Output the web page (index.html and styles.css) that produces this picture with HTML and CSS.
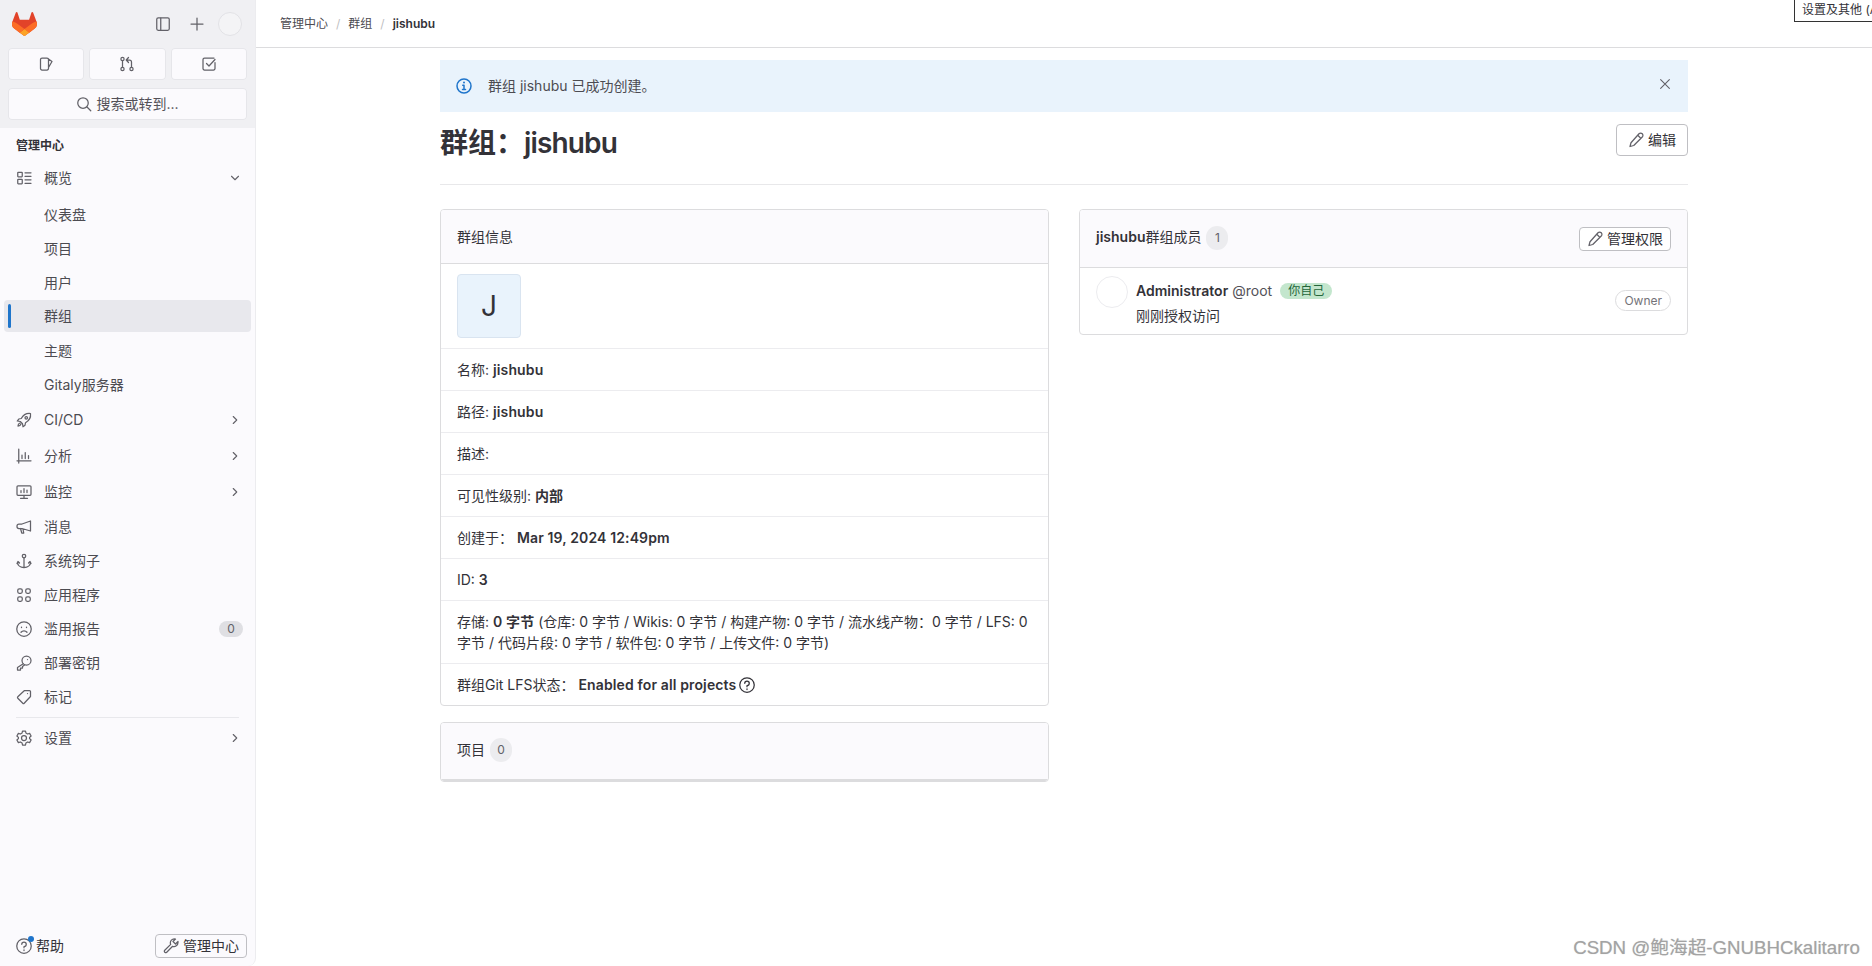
FILE: index.html
```html
<!DOCTYPE html>
<html lang="zh-CN">
<head>
<meta charset="UTF-8">
<meta name="viewport" content="width=device-width, initial-scale=1.0">
<title>群组：jishubu</title>
<link rel="stylesheet" href="styles.css">
</head>
<body>
    <aside class="sidebar">
        <div class="side-top">
            <div class="logo-row">
                <svg class="logo" viewBox="0 0 25 24">
                    <path d="m24.507 9.5-.034-.09L21.082.562a.896.896 0 0 0-1.694.091l-2.29 7.01H7.825L5.535.653a.898.898 0 0 0-1.694-.09L.451 9.411.416 9.5a6.297 6.297 0 0 0 2.09 7.278l.012.01.03.022 5.16 3.867 2.56 1.935 1.554 1.176a1.051 1.051 0 0 0 1.268 0l1.555-1.176 2.56-1.935 5.197-3.89.014-.01A6.297 6.297 0 0 0 24.507 9.5Z" fill="#E24329"/>
                    <path d="m24.507 9.5-.034-.09a11.44 11.44 0 0 0-4.56 2.051l-7.447 5.632 4.742 3.584 5.197-3.89.014-.01A6.297 6.297 0 0 0 24.507 9.5Z" fill="#FC6D26"/>
                    <path d="m7.707 20.677 2.56 1.935 1.555 1.176a1.051 1.051 0 0 0 1.268 0l1.555-1.176 2.56-1.935-4.743-3.584-4.755 3.584Z" fill="#FCA326"/>
                    <path d="M5.01 11.461a11.43 11.43 0 0 0-4.56-2.05L.416 9.5a6.297 6.297 0 0 0 2.09 7.278l.012.01.03.022 5.16 3.867 4.745-3.584-7.444-5.632Z" fill="#FC6D26"/>
                </svg>
                <svg class="icon top-panel" viewBox="0 0 16 16"><rect x="1.750" y="1.750" width="12.500" height="12.500" rx="1.500"/><path d="M5.750 2v12"/></svg>
                <svg class="icon top-plus" viewBox="0 0 16 16"><path d="M8 2v12M2 8h12"/></svg>
                <span class="top-avatar"></span>
            </div>
            <div class="quick-row">
                <a class="quick-btn"><svg class="icon" viewBox="0 0 16 16"><path d="M10.500 3.500v9a1.500 1.500 0 0 1-1.500 1.500H4a1.500 1.500 0 0 1-1.500-1.500v-9A1.500 1.500 0 0 1 4 2h5a1.500 1.500 0 0 1 1.500 1.500zM10.500 3l3.500 2.500-3.500 6"/></svg></a>
                <a class="quick-btn"><svg class="icon" viewBox="0 0 16 16"><circle cx="3.500" cy="3" r="1.600"/><circle cx="3.500" cy="13" r="1.600"/><circle cx="12.500" cy="13" r="1.600"/><path d="M3.500 4.600v6.800M12.500 11.400V6a2 2 0 0 0-2-2H8M9.500 1.500 7.200 4l2.300 2.500"/></svg></a>
                <a class="quick-btn"><svg class="icon" viewBox="0 0 16 16"><path d="M14 6.500v6a1.500 1.500 0 0 1-1.500 1.500h-9A1.500 1.500 0 0 1 2 12.500v-9A1.500 1.500 0 0 1 3.500 2H13M5.500 7.500 8 10l6-6.500"/></svg></a>
            </div>
            <a class="search-btn"><svg class="icon" viewBox="0 0 16 16"><circle cx="7" cy="7" r="5.250"/><path d="m11 11 3.750 3.750"/></svg>搜索或转到...</a>
        </div>

        <nav class="side-nav">
            <div class="nav-title">管理中心</div>
            <a class="nav-item first">
                <svg class="icon" viewBox="0 0 16 16"><rect x="1.750" y="2.250" width="4.500" height="4.500" rx=".5"/><rect x="1.750" y="9.250" width="4.500" height="4.500" rx=".5"/><path d="M9 2.750h6M9 6.250h6M9 9.750h6M9 13.250h6"/></svg>
                <span class="nav-label">概览</span>
                <svg class="icon chev" viewBox="0 0 16 16"><path d="m4 6 4 4 4-4"/></svg>
            </a>
            <div class="sub-list">
                <a class="sub-item">仪表盘</a>
                <a class="sub-item">项目</a>
                <a class="sub-item">用户</a>
                <a class="sub-item active">群组</a>
                <a class="sub-item">主题</a>
                <a class="sub-item">Gitaly服务器</a>
            </div>
            <a class="nav-item tall">
                <svg class="icon" viewBox="0 0 16 16"><path d="M14.500 1.500c-4-.5-7 1-9.250 5l-2.500.5-1.500 2 3 .5 2.250 2.250.5 3 2-1.500.5-2.500c4-2.250 5.500-5.250 5-9.250z"/><circle cx="10.250" cy="5.750" r="1.250"/><path d="M4 11c-1.500.5-2 2-2 3 1 0 2.500-.5 3-2"/></svg>
                <span class="nav-label">CI/CD</span>
                <svg class="icon chev" viewBox="0 0 16 16"><path d="m6 4 4 4-4 4"/></svg>
            </a>
            <a class="nav-item tall">
                <svg class="icon" viewBox="0 0 16 16"><path d="M2.750 1v14M1 12.750h14M6 7v3.500M9.250 4.500v6M12.500 7.500v3"/></svg>
                <span class="nav-label">分析</span>
                <svg class="icon chev" viewBox="0 0 16 16"><path d="m6 4 4 4-4 4"/></svg>
            </a>
            <a class="nav-item tall">
                <svg class="icon" viewBox="0 0 16 16"><rect x="1" y="1.750" width="14" height="9.500" rx="1"/><path d="M4.500 14.250h7M8 11.250v3M5 8.500v-2M8 8.500v-4M11 8.500V6"/></svg>
                <span class="nav-label">监控</span>
                <svg class="icon chev" viewBox="0 0 16 16"><path d="m6 4 4 4-4 4"/></svg>
            </a>
            <a class="nav-item">
                <svg class="icon" viewBox="0 0 16 16"><path d="M14.500 2v10L6 9.500H3a2 2 0 0 1-2-2V7a2 2 0 0 1 2-2h3zM4.500 9.500l1.250 4.500h2L7 10.250"/></svg>
                <span class="nav-label">消息</span>
            </a>
            <a class="nav-item">
                <svg class="icon" viewBox="0 0 16 16"><circle cx="8" cy="3" r="1.750"/><path d="M8 4.750V14.500M1.500 9c0 3.500 3 5.500 6.500 5.500s6.500-2 6.500-5.500M1 10.500l1-2 1.500 1.500M15 10.500l-1-2-1.500 1.500"/></svg>
                <span class="nav-label">系统钩子</span>
            </a>
            <a class="nav-item">
                <svg class="icon" viewBox="0 0 16 16"><rect x="1.750" y="1.750" width="4.500" height="4.500" rx="1.500"/><rect x="9.750" y="1.750" width="4.500" height="4.500" rx="1.500"/><rect x="1.750" y="9.750" width="4.500" height="4.500" rx="1.500"/><rect x="9.750" y="9.750" width="4.500" height="4.500" rx="1.500"/></svg>
                <span class="nav-label">应用程序</span>
            </a>
            <a class="nav-item">
                <svg class="icon" viewBox="0 0 16 16"><circle cx="8" cy="8" r="7.250"/><path d="M5 11.250c.8-1 1.800-1.500 3-1.500s2.200.5 3 1.500M5.500 6v.5M10.500 6v.5"/></svg>
                <span class="nav-label">滥用报告</span>
                <span class="nav-count">0</span>
            </a>
            <a class="nav-item">
                <svg class="icon" viewBox="0 0 16 16"><circle cx="10.500" cy="5.500" r="4.500"/><path d="M7.250 8.750 1.500 12.500V15h3v-2h2v-1.500l2-1.500"/><path d="M11.500 4.500h.01"/></svg>
                <span class="nav-label">部署密钥</span>
            </a>
            <a class="nav-item">
                <svg class="icon" viewBox="0 0 16 16"><path d="M8.500 1.500h5a1 1 0 0 1 1 1v5l-6.300 6.700a1 1 0 0 1-1.400 0l-5-5a1 1 0 0 1 0-1.400z"/><path d="M11.500 4.500h.01"/></svg>
                <span class="nav-label">标记</span>
            </a>
            <div class="nav-divider"></div>
            <a class="nav-item">
                <svg class="icon" viewBox="0 0 16 16"><path d="M6.500 1h3l.4 2 1.700 1 2-.6 1.500 2.600-1.500 1.400v1.200l1.500 1.400-1.500 2.600-2-.6-1.700 1-.4 2h-3l-.4-2-1.700-1-2 .6-1.500-2.600 1.500-1.400V7.400L.9 6l1.500-2.600 2 .6 1.700-1z"/><circle cx="8" cy="8" r="2.500"/></svg>
                <span class="nav-label">设置</span>
                <svg class="icon chev" viewBox="0 0 16 16"><path d="m6 4 4 4-4 4"/></svg>
            </a>
        </nav>

        <div class="side-foot">
            <a class="help-link">
                <span class="help-icon">
                    <svg class="icon" viewBox="0 0 16 16"><circle cx="8" cy="8" r="7.250"/><path d="M5.750 6.250A2.250 2.250 0 1 1 8 8.500v1.250M8 11.750v.75"/></svg>
                    <i class="help-dot"></i>
                </span>
                帮助
            </a>
            <a class="admin-btn">
                <svg class="icon" viewBox="0 0 16 16"><path d="M15 4.500a4 4 0 0 1-5.400 3.800l-6.100 6.200a1.500 1.500 0 0 1-2-2l6.200-6.100A4 4 0 0 1 12.500 1L10 3.500 12.500 6 15 3.500z"/></svg>
                管理中心
            </a>
        </div>
    </aside>

    <div class="page">
        <header class="topbar">
            <a class="crumb">管理中心</a>
            <span class="crumb-sep">/</span>
            <a class="crumb">群组</a>
            <span class="crumb-sep">/</span>
            <a class="crumb current">jishubu</a>
        </header>

        <main class="container">
            <div class="alert">
                <svg class="alert-icon" viewBox="0 0 16 16"><circle cx="8" cy="8" r="7"/><path d="M8 7.250v4M6.500 11.500h3M6.750 7.250H8"/><path class="dot" d="M8 4.500h.01"/></svg>
                <span class="alert-text">群组 jishubu 已成功创建。</span>
                <svg class="icon alert-close" viewBox="0 0 16 16"><path d="m3 3 10 10M13 3 3 13"/></svg>
            </div>

            <div class="title-row">
                <h1>群组：<span class="title-name">jishubu</span></h1>
                <a class="btn edit-btn"><svg class="icon" viewBox="0 0 16 16"><path d="M11 1.750a1.800 1.800 0 0 1 3.250 3.250l-8.500 8.500-3.750 1 1-3.750zM9.750 3.250l3 3"/></svg>编辑</a>
            </div>

            <div class="columns">
                <div class="left-col">
                    <section class="card">
                        <div class="card-head">群组信息</div>
                        <div class="row avatar-row"><div class="group-avatar">J</div></div>
                        <div class="row">名称: <b>jishubu</b></div>
                        <div class="row">路径: <b>jishubu</b></div>
                        <div class="row">描述:</div>
                        <div class="row">可见性级别: <b>内部</b></div>
                        <div class="row">创建于： <b>Mar 19, 2024 12:49pm</b></div>
                        <div class="row">ID: <b>3</b></div>
                        <div class="row multi">存储: <b>0 字节</b> (仓库: 0 字节 / Wikis: 0 字节 / 构建产物: 0 字节 / 流水线产物：0 字节 / LFS: 0 字节 / 代码片段: 0 字节 / 软件包: 0 字节 / 上传文件: 0 字节)</div>
                        <div class="row">群组Git LFS状态： <b>Enabled for all projects</b>
                            <svg class="icon help-small" viewBox="0 0 16 16"><circle cx="8" cy="8" r="7.250"/><path d="M5.750 6.250A2.250 2.250 0 1 1 8 8.500v1.250M8 11.750v.75"/></svg>
                        </div>
                    </section>

                    <section class="card projects-card">
                        <div class="card-head">项目 <span class="count">0</span></div>
                    </section>
                </div>

                <section class="card members-card">
                    <div class="card-head members-head">
                        <span class="members-title"><b>jishubu</b>群组成员</span>
                        <span class="count">1</span>
                        <a class="btn manage-btn"><svg class="icon" viewBox="0 0 16 16"><path d="M11 1.750a1.800 1.800 0 0 1 3.250 3.250l-8.500 8.500-3.750 1 1-3.750zM9.750 3.250l3 3"/></svg>管理权限</a>
                    </div>
                    <div class="member">
                        <span class="member-avatar"></span>
                        <div class="member-info">
                            <div class="member-name"><b>Administrator</b><span class="handle">@root</span><span class="you-badge">你自己</span></div>
                            <div class="member-sub">刚刚授权访问</div>
                        </div>
                        <span class="owner-badge">Owner</span>
                    </div>
                </section>
            </div>
        </main>
    </div>

    <div class="tooltip">设置及其他 (Alt+Shift+A)</div>
    <div class="watermark">CSDN @鲍海超-GNUBHCkalitarro</div>
</body>
</html>
```

FILE: styles.css
```css
* {
    box-sizing: border-box;
}

html,
body {
    height: 100%;
}

body {
    margin: 0;
    display: flex;
    overflow: hidden;
    background-color: #fff;
    color: #333238;
    font-family: Inter, "Noto Sans CJK SC", sans-serif;
    font-size: 14px;
    line-height: 20px;
}

b {
    font-weight: 600;
}

.icon {
    width: 16px;
    height: 16px;
    flex: none;
    fill: none;
    stroke: #626168;
    stroke-width: 1.25;
    stroke-linecap: round;
    stroke-linejoin: round;
}

/* sidebar */
.sidebar {
    width: 256px;
    flex: none;
    display: flex;
    flex-direction: column;
    background-color: #fbfafd;
    border-right: 1px solid #ececef;
    border-bottom-right-radius: 8px;
    overflow: hidden;
}

.side-top {
    height: 128px;
    flex: none;
    padding: 12px 8px 0;
    background-color: #f0f0f3;
}

.logo-row {
    display: flex;
    align-items: center;
    height: 24px;
}

.logo {
    width: 25px;
    height: 24px;
    margin-left: 4px;
}

.top-panel {
    margin-left: 118px;
}

.top-plus {
    margin-left: 18px;
}

.top-avatar {
    width: 24px;
    height: 24px;
    margin-left: 13px;
    border-radius: 50%;
    border: 1px solid #e2e2e6;
    background-color: #f4f4f6;
}

.quick-row {
    display: grid;
    grid-template-columns: repeat(3, 1fr);
    gap: 5px;
    margin-top: 12px;
}

.quick-btn,
.search-btn {
    height: 32px;
    display: flex;
    align-items: center;
    justify-content: center;
    background-color: #fbfafd;
    border-radius: 4px;
    box-shadow: 0 0 0 1px #e6e6ea inset;
}

.search-btn {
    gap: 4px;
    margin-top: 8px;
    color: #535158;
}

.side-nav {
    flex: 1;
    padding: 0 4px;
    color: #4c4b51;
}

.nav-title {
    height: 33px;
    padding: 8px 12px 0;
    font-size: 12px;
    font-weight: 600;
    color: #333238;
}

.nav-item,
.sub-item {
    display: flex;
    align-items: center;
    height: 34px;
    padding-left: 12px;
}

.nav-item.tall {
    height: 36px;
}

.nav-label {
    margin-left: 12px;
    flex: 1;
}

.chev {
    width: 14px;
    height: 14px;
    margin-right: 9px;
}

.sub-list {
    display: flex;
    flex-direction: column;
    padding-top: 3px;
}

.sub-item {
    padding-left: 40px;
    border-radius: 4px;
    position: relative;
}

.sub-item.active {
    height: 32px;
    margin-bottom: 2px;
    background-color: #e8e8ed;
}

.sub-item.active::before {
    content: "";
    position: absolute;
    left: 4px;
    top: 4px;
    bottom: 4px;
    width: 3px;
    border-radius: 2px;
    background-color: #1f75cb;
}

.nav-count {
    min-width: 24px;
    margin-right: 8px;
    border-radius: 8px;
    background-color: #dfdfe3;
    color: #626168;
    font-size: 12px;
    line-height: 16px;
    text-align: center;
}

.nav-divider {
    height: 1px;
    margin: 3px 12px;
    background-color: #e8e8ec;
}

.side-foot {
    display: flex;
    align-items: center;
    justify-content: space-between;
    padding: 0 8px 8px 16px;
}

.help-link {
    display: flex;
    align-items: center;
    gap: 4px;
    color: #333238;
}

.help-icon {
    position: relative;
    display: flex;
}

.help-dot {
    position: absolute;
    top: -2px;
    right: -2px;
    width: 6px;
    height: 6px;
    border-radius: 50%;
    background-color: #1f75cb;
}

.admin-btn,
.btn {
    display: flex;
    align-items: center;
    justify-content: center;
    gap: 4px;
    border: 1px solid #bfbfc3;
    border-radius: 4px;
    background-color: #fff;
    color: #333238;
}

.admin-btn {
    width: 92px;
    height: 24px;
    background-color: #fbfafd;
}

/* main area */
.page {
    flex: 1;
    min-width: 0;
}

.topbar {
    height: 48px;
    display: flex;
    align-items: center;
    padding-left: 24px;
    border-bottom: 1px solid #dcdcde;
    font-size: 12px;
}

.crumb {
    color: #4c4b51;
}

.crumb.current {
    font-weight: 600;
    color: #333238;
}

.crumb-sep {
    margin: 0 8px;
    color: #bfbfc3;
}

.container {
    width: 1248px;
    margin: 0 auto;
    padding-top: 12px;
}

.alert {
    height: 52px;
    display: flex;
    align-items: center;
    padding-left: 16px;
    background-color: #e9f3fc;
    color: #4c4b51;
}

.alert-icon {
    width: 16px;
    height: 16px;
    flex: none;
    fill: none;
    stroke: #1f75cb;
    stroke-width: 1.5;
    stroke-linecap: round;
}

.alert-icon .dot {
    stroke-width: 2;
}

.alert-text {
    margin-left: 16px;
    flex: 1;
}

.alert-close {
    margin: -4px 16px 0 0;
    width: 14px;
    height: 14px;
}

.title-row {
    height: 73px;
    display: flex;
    align-items: flex-start;
    justify-content: space-between;
    border-bottom: 1px solid #e8e8ea;
}

.title-row h1 {
    margin: 13px 0 0;
    font-size: 28px;
    line-height: 36px;
    font-weight: 600;
    color: #333238;
}

.title-name {
    letter-spacing: -.85px;
}

.edit-btn {
    width: 72px;
    height: 32px;
    margin-top: 12px;
}

.columns {
    display: grid;
    grid-template-columns: 609px 609px;
    gap: 30px;
    align-items: start;
    margin-top: 24px;
}

.card {
    border: 1px solid #dcdcde;
    border-radius: 4px;
    background-color: #fff;
    overflow: hidden;
}

.card-head {
    height: 54px;
    display: flex;
    align-items: center;
    gap: 4px;
    padding: 0 16px;
    background-color: #fbfafd;
    border-bottom: 1px solid #dcdcde;
}

.row {
    height: 42px;
    display: flex;
    align-items: center;
    padding: 0 16px;
    border-bottom: 1px solid #ececef;
    white-space: pre;
}

.row b {
    letter-spacing: .13px;
}

.row:last-child {
    height: 41px;
    border-bottom: none;
}

.row.multi {
    display: block;
    height: 63px;
    padding-top: 10px;
    line-height: 21px;
    white-space: normal;
}

.avatar-row {
    height: 85px;
    align-items: flex-start;
    padding-top: 10px;
}

.group-avatar {
    width: 64px;
    height: 64px;
    display: flex;
    align-items: center;
    justify-content: center;
    border: 1px solid #d9e4f0;
    border-radius: 4px;
    background-color: #e9f3fc;
    font-size: 28px;
    color: #333238;
}

.help-small {
    margin-left: 3px;
    stroke: #333238;
}

.projects-card {
    margin-top: 16px;
}

.projects-card .card-head {
    height: 58px;
    padding-bottom: 2px;
    border-bottom: 2px solid #dcdcde;
}

.count {
    min-width: 22px;
    height: 24px;
    margin-left: 1px;
    padding: 0 7px;
    border-radius: 12px;
    background-color: #ececef;
    color: #626168;
    font-size: 12px;
    line-height: 24px;
    text-align: center;
}

.members-head {
    height: 58px;
}

.members-title {
    margin-bottom: 3px;
}

.members-head .count {
    margin-bottom: 1px;
}

.manage-btn {
    width: 92px;
    height: 24px;
    margin-left: auto;
}

.member {
    height: 66px;
    display: flex;
    padding: 8px 16px 0;
}

.member-avatar {
    width: 32px;
    height: 32px;
    flex: none;
    border-radius: 50%;
    border: 1px solid #ececef;
}

.member-info {
    flex: 1;
    margin-left: 8px;
}

.member-name {
    display: flex;
    align-items: center;
    height: 16px;
    margin-top: 7px;
}

.handle {
    margin-left: 4px;
    color: #535158;
}

.you-badge {
    margin-left: 8px;
    padding: 0 8px;
    height: 16px;
    border-radius: 8px;
    background-color: #c3e6cd;
    color: #24663b;
    font-size: 12px;
    line-height: 16px;
}

.member-sub {
    margin-top: 7px;
}

.owner-badge {
    height: 21px;
    margin-top: 14px;
    padding: 0 8px;
    border: 1px solid #dcdcde;
    border-radius: 11px;
    color: #737278;
    font-size: 12px;
    line-height: 19px;
}

/* floats over the page */
.tooltip {
    position: absolute;
    top: -1px;
    left: 1794px;
    height: 23px;
    padding: 0 7px;
    border: 1px solid #333;
    background-color: #fff;
    font-size: 12px;
    line-height: 20px;
    white-space: nowrap;
}

.watermark {
    position: absolute;
    right: 12px;
    bottom: 6px;
    color: #a3a3a3;
    font-family: "Liberation Sans", "Noto Sans CJK SC", sans-serif;
    font-size: 18.7px;
    line-height: 24px;
    text-shadow: 0 0 1px #ccc;
}
```
